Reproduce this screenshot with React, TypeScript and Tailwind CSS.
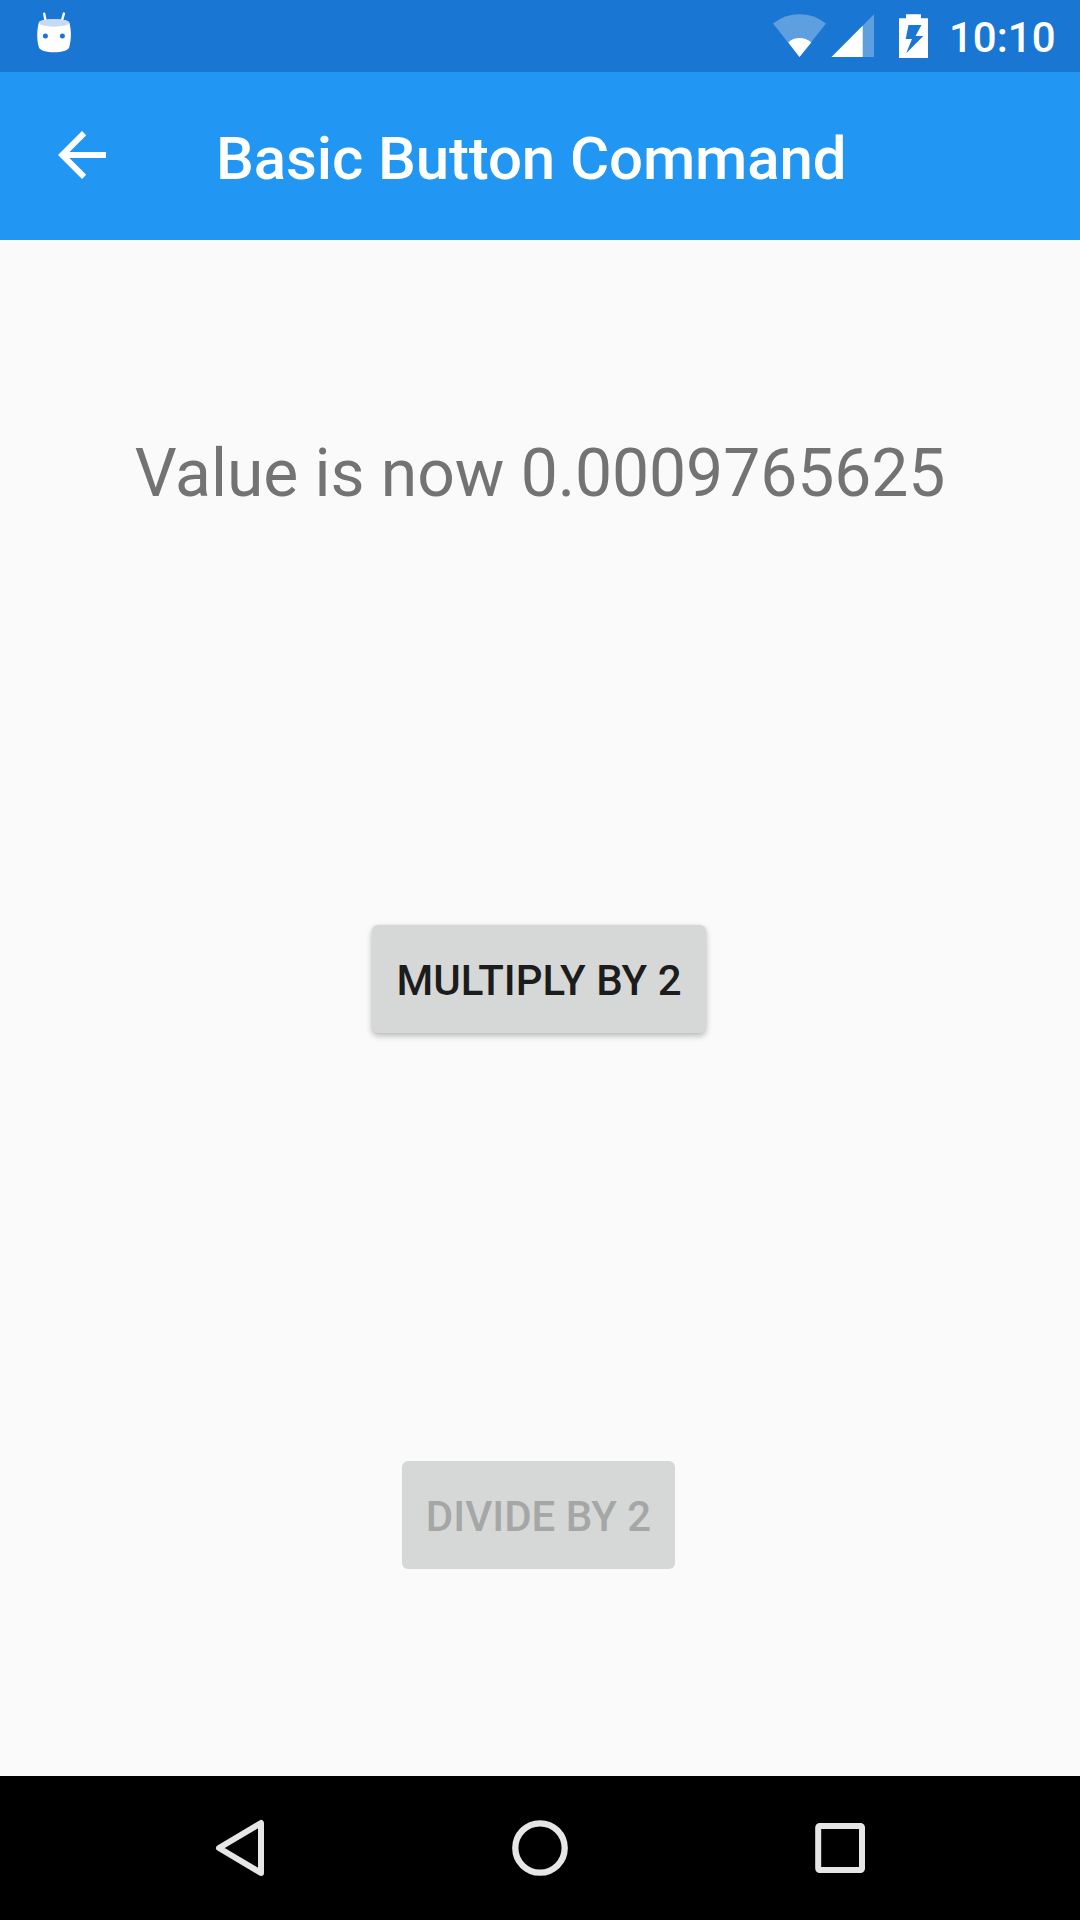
function AndroidHead() {
  return (
    <svg width="40" height="48" viewBox="34 8 40 48" className="shrink-0">
      <path d="M44.2 13.6L45.6 21M63.9 13.6L61.8 21" stroke="#fff" strokeWidth="2.4" strokeLinecap="round" />
      <path d="M38.8 22.5C40.5 18.2 67.5 18.2 69.4 22.5C71.2 30 71.7 38 69.3 47C68.2 54 40 54 38.8 47C36.4 38 37 30 38.8 22.5Z" fill="#fff" />
      <ellipse cx="54.1" cy="22.9" rx="15" ry="3.8" fill="#c6dbf3" />
      <circle cx="45.4" cy="36" r="2.5" fill="#1976d2" />
      <circle cx="62.4" cy="36" r="2.5" fill="#1976d2" />
    </svg>
  );
}

function StatusIcons() {
  return (
    <svg width="160" height="48" viewBox="771 12 160 48" className="shrink-0">
      <path d="M799.5 57L773 23.6Q784.5 14.3 799.5 14.3Q814.5 14.3 826 23.6Z" fill="#fff" fillOpacity="0.3" />
      <path d="M799.5 57L788.3 42.4Q793 38 799.5 38Q806 38 811.3 42.4Z" fill="#fff" />
      <path d="M831.5 57L874 14.3V57Z" fill="#fff" fillOpacity="0.3" />
      <path d="M831.5 57L862.7 25.7V57Z" fill="#fff" />
      <path
        fillRule="evenodd"
        d="M906 14.3H921V18.3H928V58H899V18.3H906ZM908.5 25L905.7 39H912L906.2 53.2L923.3 36H915.5L921.5 25Z"
        fill="#fff"
      />
    </svg>
  );
}

export default function App() {
  return (
    <div className="flex h-[1920px] w-[1080px] flex-col overflow-hidden bg-[#fafafa] font-['Roboto',sans-serif]">
      <div className="flex h-[72px] shrink-0 items-start justify-between bg-[#1976d2] pt-2 pl-[34px]">
        <AndroidHead />
        <div className="flex pt-1">
          <StatusIcons />
          <span className="ml-[18px] w-[131px] text-[42px] leading-[51px] font-medium whitespace-nowrap text-white">10:10</span>
        </div>
      </div>

      <header className="flex h-[168px] shrink-0 items-center bg-[#2196f3] pl-[46px] text-white">
        <button aria-label="Back" className="-mt-0.5">
          <svg width="72" height="72" viewBox="0 0 24 24" fill="currentColor">
            <path d="M20 11H7.830l5.590-5.590L12 4l-8 8 8 8 1.410-1.410L7.830 13H20v-2z" />
          </svg>
        </button>
        <h1 className="mt-[5px] ml-[98px] text-[60px] leading-[70px] font-medium tracking-[-0.12px] whitespace-nowrap">
          Basic Button Command
        </h1>
      </header>

      <main className="flex flex-1 flex-col items-center pt-[195px]">
        <p className="text-[66px] leading-[78px] tracking-[-0.06px] whitespace-nowrap text-[#737373]">Value is now 0.0009765625</p>
        <button className="mt-[412px] mr-[2px] h-[108px] w-[334px] rounded-[6px] bg-[#d6d8d7] pt-[3px] text-[42px] leading-[50px] font-medium whitespace-nowrap text-[#1c1c1c] shadow-[0_3px_6px_rgba(0,0,0,0.26),0_0_3px_rgba(0,0,0,0.05)]">
          MULTIPLY BY 2
        </button>
        <button
          disabled
          className="mt-[428px] mr-[3px] h-[108px] w-[273px] rounded-[6px] bg-[#d6d8d7] pt-[3px] text-[42px] leading-[50px] font-medium whitespace-nowrap text-[#a5a7a6]"
        >
          DIVIDE BY 2
        </button>
      </main>

      <nav className="flex h-36 shrink-0 items-center justify-center gap-[236px] bg-black">
        <svg width="64" height="64" viewBox="0 0 64 64" fill="none" stroke="#e6e6e6" strokeWidth="6" strokeLinejoin="round">
          <path d="M53 7V57L11 32Z" />
        </svg>
        <svg width="64" height="64" viewBox="0 0 64 64" fill="none" stroke="#e6e6e6" strokeWidth="6.3">
          <circle cx="32" cy="32" r="24.7" />
        </svg>
        <svg width="64" height="64" viewBox="0 0 64 64" fill="none" stroke="#e6e6e6" strokeWidth="6">
          <rect x="10.2" y="10" width="43.8" height="44" rx="1.5" />
        </svg>
      </nav>
    </div>
  );
}
